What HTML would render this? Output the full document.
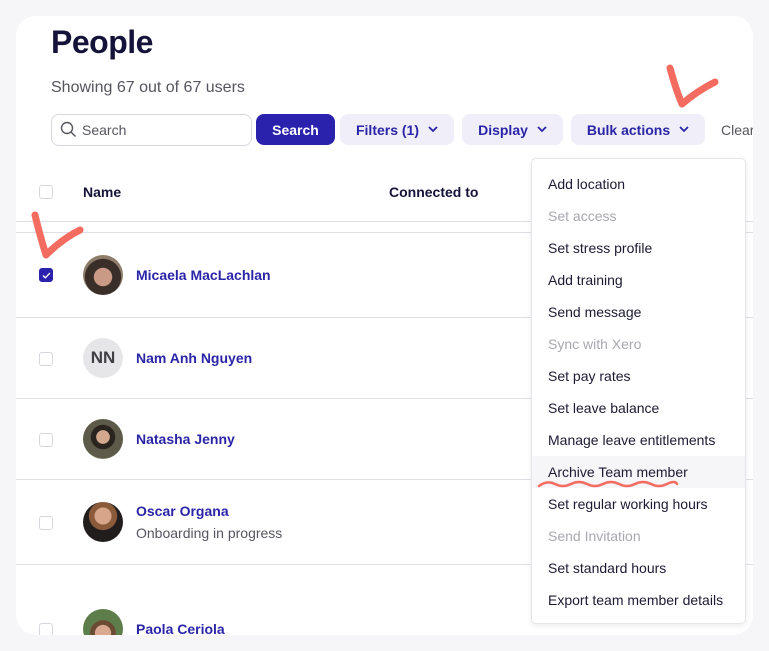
<!DOCTYPE html>
<html><head><style>
*{margin:0;padding:0;box-sizing:border-box}
body{width:769px;height:651px;background:#f6f6f9;font-family:"Liberation Sans",Arial,sans-serif;position:relative;overflow:hidden}
.card{position:absolute;left:16px;top:16px;width:737px;height:619px;background:#fff;border-radius:20px;overflow:hidden}
.abs{position:absolute}
h1{position:absolute;left:51px;top:24px;font-size:32px;font-weight:bold;color:#16133a;letter-spacing:-0.5px}
.sub{left:51px;top:79px;font-size:16px;color:#55555f}
.search{left:51px;top:114px;width:201px;height:32px;border:1px solid #d8d8de;border-radius:8px;font-size:14px;color:#55555f;padding:7px 0 0 30px}
.btn{top:114px;height:31px;border-radius:8px;font-size:14px;font-weight:bold;color:#2a25a8;background:#efeef9;display:flex;align-items:center;justify-content:center;gap:9px}
.line{left:16px;height:1px;background:#dedee3;width:737px}
.cb{left:39px;width:14px;height:14px;border:1px solid #d6d6dc;border-radius:3px;background:#fff}
.nm{left:136px;font-size:14px;font-weight:bold;color:#2a25a8}
.av{left:83px;width:40px;height:40px;border-radius:50%}
.menu{left:531px;top:158px;width:215px;height:466px;background:#fff;border:1px solid #e6e6ea;border-radius:5px;box-shadow:0 2px 6px rgba(0,0,0,.08)}
.mi{position:absolute;left:16px;font-size:14px;color:#1c1a33}
.dis{color:#a8a8ae}
</style></head><body>
<div class="card"></div>
<h1>People</h1>
<div class="abs sub">Showing 67 out of 67 users</div>
<div class="abs search">Search</div>
<svg class="abs" style="left:60px;top:121px" width="17" height="17" viewBox="0 0 17 17"><circle cx="7" cy="7" r="5.5" fill="none" stroke="#55555f" stroke-width="1.4"/><path d="M11 11l4.5 4.5" stroke="#55555f" stroke-width="1.4"/></svg>
<div class="abs btn" style="left:256px;width:79px;background:#2a22ad;color:#fff">Search</div>
<div class="abs btn" style="left:340px;width:114px">Filters (1)<svg width="10" height="7"><path d="M1 1l4 4 4-4" fill="none" stroke="#2a25a8" stroke-width="1.8"/></svg></div>
<div class="abs btn" style="left:462px;width:101px">Display<svg width="10" height="7"><path d="M1 1l4 4 4-4" fill="none" stroke="#2a25a8" stroke-width="1.8"/></svg></div>
<div class="abs btn" style="left:571px;width:134px">Bulk actions<svg width="10" height="7"><path d="M1 1l4 4 4-4" fill="none" stroke="#2a25a8" stroke-width="1.8"/></svg></div>
<div class="abs" style="left:721px;top:122px;font-size:14px;color:#55555f;width:32px;overflow:hidden;white-space:nowrap">Clear</div>

<div class="abs cb" style="top:185px"></div>
<div class="abs" style="left:83px;top:184px;font-size:14px;font-weight:bold;color:#16133a">Name</div>
<div class="abs" style="left:389px;top:184px;font-size:14px;font-weight:bold;color:#16133a">Connected to</div>
<div class="abs line" style="top:221px"></div>
<div class="abs line" style="top:232px"></div>

<div class="abs cb" style="top:268px;background:#2a22ad;border-color:#2a22ad"></div>
<svg class="abs" style="left:42px;top:272px" width="9" height="7"><path d="M1 3.5l2.3 2.3L8 1" fill="none" stroke="#fff" stroke-width="1.3"/></svg>
<div class="abs av" style="top:255px;background:radial-gradient(circle at 50% 55%,#c99a86 0 30%,#3a2e28 32% 60%,#8d7d6a 62%)"></div>
<div class="abs nm" style="top:267px">Micaela MacLachlan</div>
<div class="abs line" style="top:317px"></div>

<div class="abs cb" style="top:352px"></div>
<div class="abs av" style="top:338px;background:#e6e6e8;color:#3f3f44;font-weight:bold;font-size:17px;text-align:center;line-height:40px">NN</div>
<div class="abs nm" style="top:350px">Nam Anh Nguyen</div>
<div class="abs line" style="top:398px"></div>

<div class="abs cb" style="top:433px"></div>
<div class="abs av" style="top:419px;background:radial-gradient(circle at 50% 45%,#d2a98f 0 22%,#2a241f 24% 40%,#5d5a4a 42% 70%,#6f7a5a 72%)"></div>
<div class="abs nm" style="top:431px">Natasha Jenny</div>
<div class="abs line" style="top:479px"></div>

<div class="abs cb" style="top:516px"></div>
<div class="abs av" style="top:502px;background:radial-gradient(circle at 50% 35%,#d6a58a 0 25%,#8a5a3a 27% 42%,#221d1d 44%)"></div>
<div class="abs nm" style="top:503px">Oscar Organa</div>
<div class="abs" style="left:136px;top:525px;font-size:14px;color:#55555f">Onboarding in progress</div>
<div class="abs line" style="top:564px"></div>

<div class="abs cb" style="top:623px"></div>
<div class="abs av" style="top:609px;background:radial-gradient(circle at 50% 60%,#d8a890 0 25%,#6b4a34 27% 40%,#5d7d4a 42%)"></div>
<div class="abs nm" style="top:621px">Paola Ceriola</div>
<div class="abs" style="left:0;top:635px;width:769px;height:16px;background:#f6f6f9"></div>

<div class="abs menu">
<div class="abs" style="left:0;top:297px;width:213px;height:32px;background:#f6f6f9"></div>
<div class="mi" style="top:17px">Add location</div>
<div class="mi dis" style="top:49px">Set access</div>
<div class="mi" style="top:81px">Set stress profile</div>
<div class="mi" style="top:113px">Add training</div>
<div class="mi" style="top:145px">Send message</div>
<div class="mi dis" style="top:177px">Sync with Xero</div>
<div class="mi" style="top:209px">Set pay rates</div>
<div class="mi" style="top:241px">Set leave balance</div>
<div class="mi" style="top:273px">Manage leave entitlements</div>
<div class="mi" style="top:305px">Archive Team member</div>
<div class="mi" style="top:337px">Set regular working hours</div>
<div class="mi dis" style="top:369px">Send Invitation</div>
<div class="mi" style="top:401px">Set standard hours</div>
<div class="mi" style="top:433px">Export team member details</div>
</div>
<svg class="abs" style="left:0;top:0" width="769" height="651">
<path d="M670 68 Q676 90 682 104 Q697 91 715 82" fill="none" stroke="#f46b5f" stroke-width="7" stroke-linecap="round" stroke-linejoin="round"/>
<path d="M35 215 Q40 236 46 255 Q62 239 80 230" fill="none" stroke="#f46b5f" stroke-width="7" stroke-linecap="round" stroke-linejoin="round"/>
<path d="M539 486 q8 -6 16 -2 t16 0 t16 0 t16 0 t16 0 t16 0 t16 0 t16 0 t10 0" fill="none" stroke="#f46b5f" stroke-width="2.5" stroke-linecap="round"/>
</svg>
</body></html>
